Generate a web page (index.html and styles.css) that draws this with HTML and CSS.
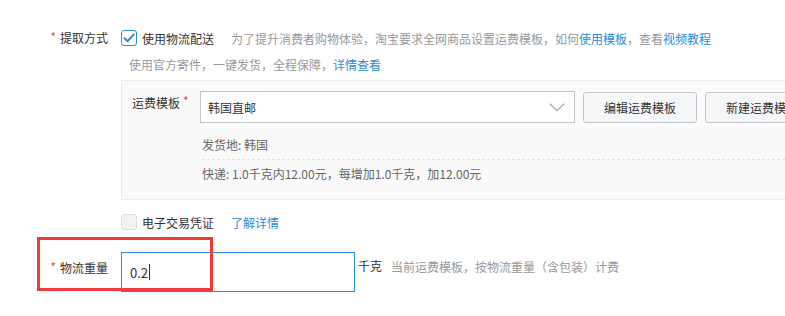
FILE: index.html
```html
<!DOCTYPE html>
<html lang="zh-CN">
<head>
    <meta charset="UTF-8">
    <title>物流信息</title>
    <link rel="stylesheet" href="styles.css">
</head>
<body>
    <div class="form">
        <!-- 提取方式 -->
        <div class="row row-first">
            <div class="row-label"><span class="req">*</span>提取方式</div>
            <div class="row-body">
                <div class="line">
                    <span class="checkbox checked">
                        <svg width="12" height="10" viewBox="0 0 12 10"><path d="M1.5 5.2 L4.6 8.2 L10.6 1.6" fill="none" stroke="#2a8adb" stroke-width="2" stroke-linecap="round" stroke-linejoin="round"/></svg>
                    </span>
                    <span class="check-text">使用物流配送</span>
                    <span class="tip">为了提升消费者购物体验，淘宝要求全网商品设置运费模板，如何<a href="#" class="link">使用模板</a>，查看<a href="#" class="link">视频教程</a></span>
                </div>
                <div class="hint">使用官方寄件，一键发货，全程保障，<a href="#" class="link">详情查看</a></div>

                <!-- 运费模板面板 -->
                <div class="panel">
                    <div class="panel-row">
                        <div class="panel-label">运费模板<span class="req-after">*</span></div>
                        <div class="select">
                            <span>韩国直邮</span>
                            <svg width="16" height="9" viewBox="0 0 16 9"><path d="M0.8 0.8 L8 7.6 L15.2 0.8" fill="none" stroke="#a3a9bb" stroke-width="1.3"/></svg>
                        </div>
                        <button class="btn">编辑运费模板</button>
                        <button class="btn">新建运费模板</button>
                    </div>
                    <div class="panel-info">
                        <div class="info-line">发货地: 韩国</div>
                        <div class="info-line dashed">快递: 1.0千克内12.00元，每增加1.0千克，加12.00元</div>
                    </div>
                </div>
            </div>
        </div>

        <!-- 电子交易凭证 -->
        <div class="row row-voucher">
            <div class="row-label"></div>
            <div class="line">
                <span class="checkbox"></span>
                <span class="check-text">电子交易凭证</span>
                <a href="#" class="link more">了解详情</a>
            </div>
        </div>

        <!-- 物流重量 -->
        <div class="row row-weight">
            <div class="row-label"><span class="req">*</span>物流重量</div>
            <div class="weight-input">0.2<span class="caret"></span></div>
            <span class="unit">千克</span>
            <span class="tip unit-tip">当前运费模板，按物流重量（含包装）计费</span>
        </div>

        <div class="highlight"></div>
    </div>
</body>
</html>
```

FILE: styles.css
```css
/* Basic Reset */
body, div, button {
    margin: 0;
    padding: 0;
    box-sizing: border-box;
}

body {
    font-family: "Noto Sans CJK SC", "Noto Sans", sans-serif;
    font-size: 12px;
    color: #333;
    background-color: #fff;
    overflow: hidden;
    width: 785px;
    height: 316px;
}

a {
    text-decoration: none;
}

.link {
    color: #2a8adb;
}

.form {
    position: relative;
    padding-top: 28px;
}

/* Rows */
.row {
    display: flex;
}

.row-label {
    width: 121px;
    flex-shrink: 0;
    padding-right: 13px;
    text-align: right;
    line-height: 20px;
    white-space: nowrap;
}

.req {
    color: #f0474a;
    margin-right: 4px;
    font-size: 12px;
    position: relative;
    top: -1px;
}

.row-body {
    flex: 1;
    min-width: 0;
}

.line {
    display: flex;
    align-items: center;
    height: 20px;
    white-space: nowrap;
}

/* Checkbox */
.checkbox {
    width: 16px;
    height: 16px;
    border: 1px solid #dcdee3;
    border-radius: 3px;
    background-color: #f1f2f5;
    display: inline-flex;
    align-items: center;
    justify-content: center;
    box-sizing: border-box;
    flex-shrink: 0;
}

.checkbox.checked {
    border-color: #2a8adb;
    background-color: #fff;
}

.check-text {
    margin-left: 5px;
    color: #333;
}

.tip {
    color: #999;
    margin-left: 17px;
}

.more {
    margin-left: 17px;
}

.hint {
    color: #999;
    line-height: 20px;
    margin-top: 7px;
    padding-left: 8px;
    white-space: nowrap;
}

/* Panel */
.panel {
    margin-top: 5px;
    width: 720px;
    background-color: #fafafa;
    border: 1px solid #ececec;
    padding: 10px 10px 15px 10px;
}

.panel-row {
    display: flex;
    align-items: flex-start;
}

.panel-label {
    width: 68px;
    flex-shrink: 0;
    line-height: 24px;
    color: #333;
    white-space: nowrap;
}

.req-after {
    color: #f0474a;
    margin-left: 3px;
    position: relative;
    top: -2px;
}

.select {
    width: 375px;
    height: 32px;
    border: 1px solid #c4c6cf;
    background-color: #fff;
    display: flex;
    align-items: center;
    justify-content: space-between;
    padding: 0 9px 0 7px;
    color: #333;
    flex-shrink: 0;
}

.btn {
    height: 31px;
    margin-top: 1px;
    margin-left: 8px;
    padding: 0 20px;
    background-color: #f5f6f8;
    border: 1px solid #c4c6cf;
    border-radius: 3px;
    font-family: inherit;
    font-size: 12px;
    color: #333;
    white-space: nowrap;
    flex-shrink: 0;
}

.panel-info {
    margin-left: 70px;
    margin-top: 12px;
}

.info-line {
    line-height: 20px;
    color: #666;
    white-space: nowrap;
}

.info-line.dashed {
    margin-top: 4px;
    padding-top: 4px;
    border-top: 1px dashed #e2e2e2;
}

/* 电子交易凭证 */
.row-voucher {
    margin-top: 12px;
}

/* 物流重量 */
.row-weight {
    margin-top: 20px;
    align-items: flex-start;
}

.row-weight .row-label {
    padding-top: 6px;
}

.weight-input {
    width: 234px;
    height: 40px;
    border: 1px solid #2a8adb;
    display: flex;
    align-items: center;
    padding-left: 8px;
    font-size: 13px;
    color: #333;
}

.caret {
    display: inline-block;
    width: 1px;
    height: 16px;
    background-color: #333;
    margin-left: 1px;
}

.unit {
    margin-left: 3px;
    line-height: 20px;
    padding-top: 4px;
}

.unit-tip {
    margin-left: 9px;
    line-height: 20px;
    padding-top: 5px;
}

/* Red highlight box */
.highlight {
    position: absolute;
    left: 37px;
    top: 237px;
    width: 176px;
    height: 54px;
    border: 3px solid #f23a3a;
    box-sizing: border-box;
}
```
